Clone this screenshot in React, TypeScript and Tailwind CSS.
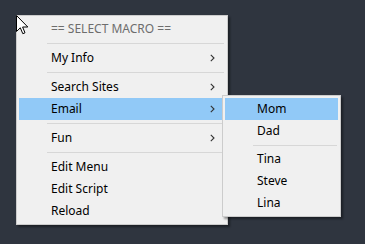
import React from "react";

const font = { fontFamily: '"Noto Sans", "Open Sans", sans-serif' };

function Chevron() {
  return (
    <svg width="5" height="8" viewBox="0 0 5 8" className="shrink-0">
      <path d="M0.8 0.8 L4 4 L0.8 7.2" fill="none" stroke="#333" strokeWidth="1.1" />
    </svg>
  );
}

function Item({ label, arrow, active, title }: { label: string; arrow?: boolean; active?: boolean; title?: boolean }) {
  return (
    <div className={`h-[22px] flex items-center pl-[32px] pr-[10px] ${active ? "bg-[#91c9f7]" : ""}`}>
      <span className={`flex-1 text-[12px] leading-none ${title ? "text-[#6d6d6d]" : "text-black"}`}>{label}</span>
      {arrow && <Chevron />}
    </div>
  );
}

function Sep() {
  return (
    <div className="h-[7px] flex items-center pl-[28px] pr-[1px]">
      <div className="h-px flex-1 bg-[#d7d7d7]" />
    </div>
  );
}

function SubItem({ label, active }: { label: string; active?: boolean }) {
  return (
    <div className={`h-[22px] flex items-center pl-[32px] ${active ? "bg-[#91c9f7]" : ""}`}>
      <span className="text-[12px] leading-none text-black">{label}</span>
    </div>
  );
}

export default function App() {
  return (
    <div className="relative w-[365px] h-[244px] bg-[#2f353f] overflow-hidden" style={font}>
      <div className="absolute left-[16px] top-[15px] w-[212px] h-[210px] bg-[#f0f0f0] border border-[#cccccc] p-[2px] shadow-[2px_2px_2px_rgba(0,0,0,0.4)] flex flex-col">
        <Item label="== SELECT MACRO ==" title />
        <Sep />
        <Item label="My Info" arrow />
        <Sep />
        <Item label="Search Sites" arrow />
        <Item label="Email" arrow active />
        <Sep />
        <Item label="Fun" arrow />
        <Sep />
        <Item label="Edit Menu" />
        <Item label="Edit Script" />
        <Item label="Reload" />
      </div>
      <div className="absolute left-[222px] top-[95px] w-[119px] h-[122px] bg-[#f0f0f0] border border-[#cccccc] p-[2px] shadow-[2px_2px_2px_rgba(0,0,0,0.4)] flex flex-col">
        <SubItem label="Mom" active />
        <SubItem label="Dad" />
        <div className="h-[7px] flex items-center pl-[28px] pr-[1px]">
          <div className="h-px flex-1 bg-[#d7d7d7]" />
        </div>
        <SubItem label="Tina" />
        <SubItem label="Steve" />
        <SubItem label="Lina" />
      </div>
      <svg className="absolute left-[16px] top-[15px]" width="13" height="20" viewBox="0 0 13 20">
        <path d="M0.5 0.5 L0.5 16.5 L4.3 12.8 L6.8 18.7 L9 17.8 L6.6 12 L11.8 12 Z" fill="#fff" stroke="#000" strokeWidth="1" strokeLinejoin="miter" />
      </svg>
    </div>
  );
}
